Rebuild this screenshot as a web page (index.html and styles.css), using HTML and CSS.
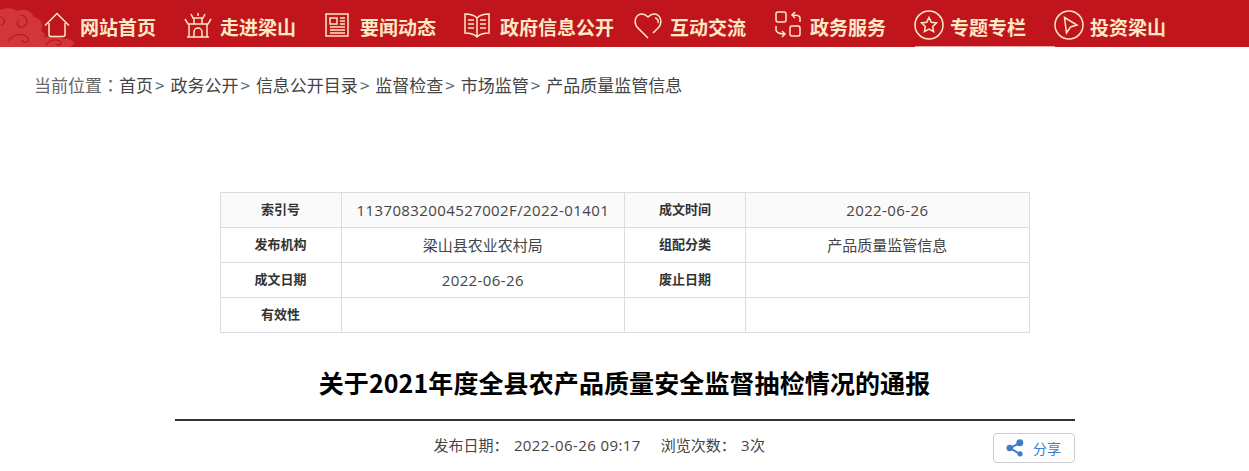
FILE: index.html
```html
<!DOCTYPE html>
<html lang="zh">
<head>
<meta charset="utf-8">
<title>关于2021年度全县农产品质量安全监督抽检情况的通报</title>
<link rel="stylesheet" href="styles.css">
</head>
<body>
<header class="nav">
  <svg class="cloud" viewBox="0 0 76 47" width="76" height="47">
    <path fill="#d2363c" d="M0 10C6 7 13 8 17 11C23 8 31 10 34 17C40 18 44 24 41 31C45 33 45 36 44 38C50 35 60 36 63 39C69 38 74 41 74 44C72 46 70 47 68 47H0Z"/>
    <g fill="none" stroke="#c1151d" stroke-width="1.200"><path d="M0 17C5 17 6 24 1 25"/><path d="M20 15C27 15 30 24 23 27C18 28 15 23 19 21"/><path d="M8 41C14 33 25 33 28 38C30 43 22 44 22 40"/><path d="M46 45C49 39 58 39 61 42C62 45 57 46 56 44"/></g>
  </svg>
  <a class="item"><svg class="ic" viewBox="0 0 28 28"><path d="M1 14.500 13 2.500 25 14.500M5 12V23.500Q5 25.500 7 25.500H19Q21 25.500 21 23.500V12"/></svg><span>网站首页</span></a>
  <a class="item"><svg class="ic" viewBox="0 0 28 28"><path d="M14 2V5M7 3 9 7H19L21 3M1 8 4 13H24L27 8M5 13V26M23 13V26M3 26H25M10 26V21A4 4 0 0 1 18 21V26M10 7V13M18 7V13"/></svg><span>走进梁山</span></a>
  <a class="item"><svg class="ic" viewBox="0 0 28 28"><path d="M2 3H24V25H2ZM6 7H13V13H6ZM16 7H21M16 10H21M16 13H21M6 16H21M6 19H21M6 22H21"/></svg><span>要闻动态</span></a>
  <a class="item wide"><svg class="ic" viewBox="0 0 28 28"><path d="M13 7C10 4 5 3 1 3V22C5 22 10 23 13 26C16 23 21 22 25 22V3C21 3 16 4 13 7ZM13 7V26M4 9H10M4 13H10M4 17H10M16 9H22M16 13H22M16 17H22"/></svg><span>政府信息公开</span></a>
  <a class="item"><svg class="ic" viewBox="0 0 28 28"><path d="M14 27 3 16C-1 10 2 3 8 3C10 3 12 4 14 6C16 4 18 3 20 3C26 3 29 10 25 16L19 22M21 7C23 7 25 10 24 12"/></svg><span>互动交流</span></a>
  <a class="item"><svg class="ic" viewBox="0 0 28 28"><rect x="2" y="1" width="10" height="10" rx="2"/><rect x="16" y="15" width="10" height="10" rx="2"/><path d="M26 11V7C26 5 24 4 19 4M21 1 18 4 21 7M2 15V19C2 21 5 23 10 23M8 20 11 23 8 26"/></svg><span>政务服务</span></a>
  <a class="item active"><svg class="ic round" viewBox="0 0 28 28"><circle cx="14" cy="14" r="14"/><path d="M14 6.500 16.300 11.200 21.500 11.900 17.700 15.500 18.600 20.700 14 18.200 9.400 20.700 10.300 15.500 6.500 11.900 11.700 11.200Z"/></svg><span>专题专栏</span></a>
  <a class="item"><svg class="ic round" viewBox="0 0 28 28"><circle cx="14" cy="14" r="14"/><path d="M9.500 6.500 22 14 15.500 16 11.500 22Z"/></svg><span>投资梁山</span></a>
</header>

<nav class="crumb">
  <span>当前位置<span class="colon" lang="zh-TW">：</span></span><a>首页</a><i>&gt;</i><a>政务公开</a><i>&gt;</i><a>信息公开目录</a><i>&gt;</i><a>监督检查</a><i>&gt;</i><a>市场监管</a><i>&gt;</i><a>产品质量监管信息</a>
</nav>

<main class="main">
  <table class="info">
    <tr><th>索引号</th><td class="num">11370832004527002F/2022-01401</td><th>成文时间</th><td class="num">2022-06-26</td></tr>
    <tr><th>发布机构</th><td>梁山县农业农村局</td><th>组配分类</th><td>产品质量监管信息</td></tr>
    <tr><th>成文日期</th><td class="num">2022-06-26</td><th>废止日期</th><td></td></tr>
    <tr><th>有效性</th><td></td><td></td><td></td></tr>
  </table>
  <h1 class="title">关于2021年度全县农产品质量安全监督抽检情况的通报</h1>
  <div class="meta">
    <span>发布日期： <span class="num gap">2022-06-26 09:17</span></span>
    <span class="views">浏览次数： <span class="num gap">3</span>次</span>
    <a class="share"><svg viewBox="0 0 18 18" width="18" height="18"><path d="M13.500 4 4 9 14 15" fill="none" stroke="#3d7cc9" stroke-width="2"/><circle cx="13.800" cy="3.800" r="3.500" fill="#3d7cc9"/><circle cx="3.700" cy="9" r="3.200" fill="#3d7cc9"/><circle cx="14" cy="14.800" r="2.600" fill="#3d7cc9"/></svg>分享</a>
  </div>
</main>
</body>
</html>
```
FILE: styles.css
```css
* { box-sizing: border-box; }
html, body { margin: 0; height: 471px; overflow: hidden; }
body { background: #fff; color: #333; font-family: "Noto Sans CJK SC", "Liberation Sans", sans-serif; }

.nav { position: relative; display: flex; height: 47px; padding-left: 44px; background: #c1151d; }
.cloud { position: absolute; left: 0; top: 0; }
.item { position: relative; display: flex; align-items: center; gap: 8px; width: 140px; height: 47px; color: #fde9c4; font-size: 19px; font-weight: 700; white-space: nowrap; }
.item.wide { width: 170px; }
.item.active::after { content: ""; position: absolute; left: 1px; bottom: 0; width: 140px; height: 1px; background: #e5a5a5; }
.ic { width: 28px; height: 28px; flex: none; margin-top: 2px; fill: none; stroke: #fde9c4; stroke-width: 1.500; overflow: visible; }
.ic.round { margin-left: 1px; margin-right: -1px; }
.item span { margin-top: 5px; }

.crumb { display: flex; padding: 26px 0 0 34px; height: 145px; font-size: 17px; line-height: 24px; color: #666; }
.crumb a { color: #444; }
.crumb i { font-style: normal; color: #55707f; margin: 0 6px 0 2px; }
.colon { font-family: "Noto Sans CJK TC", sans-serif; }

.main { width: 900px; margin: 0 auto; }
.num { font-family: "Open Sans", "Noto Sans CJK SC", sans-serif; letter-spacing: .4px; }
.gap { margin-left: 2px; }
.info { width: 810px; margin: 0 auto; border-collapse: collapse; table-layout: fixed; font-size: 15px; }
.info th, .info td { height: 35px; padding: 0 0 2px; border: 1px solid #ddd; text-align: center; font-weight: 400; color: #444; }
.info th { width: 121px; padding-bottom: 4px; font-size: 13px; font-weight: 700; color: #333; }
.info td { width: 283px; }
.info td.num { padding-bottom: 0; }
.info tr:first-child th, .info tr:first-child td { background: #fafafa; }

.title { margin: 0; padding-top: 31px; height: 88px; border-bottom: 2px solid #333; font-size: 25px; line-height: 36px; font-weight: 700; letter-spacing: .1px; color: #000; text-align: center; }
.meta { display: flex; align-items: flex-start; padding: 12px 0 0 259px; font-size: 15px; line-height: 24px; color: #444; }
.views { margin-left: 20px; }
.share { display: flex; align-items: center; justify-content: center; gap: 9px; width: 82px; height: 30px; margin-left: auto; border: 1px solid #ccc; border-radius: 4px; color: #3d7cc9; font-size: 14px; }
```
